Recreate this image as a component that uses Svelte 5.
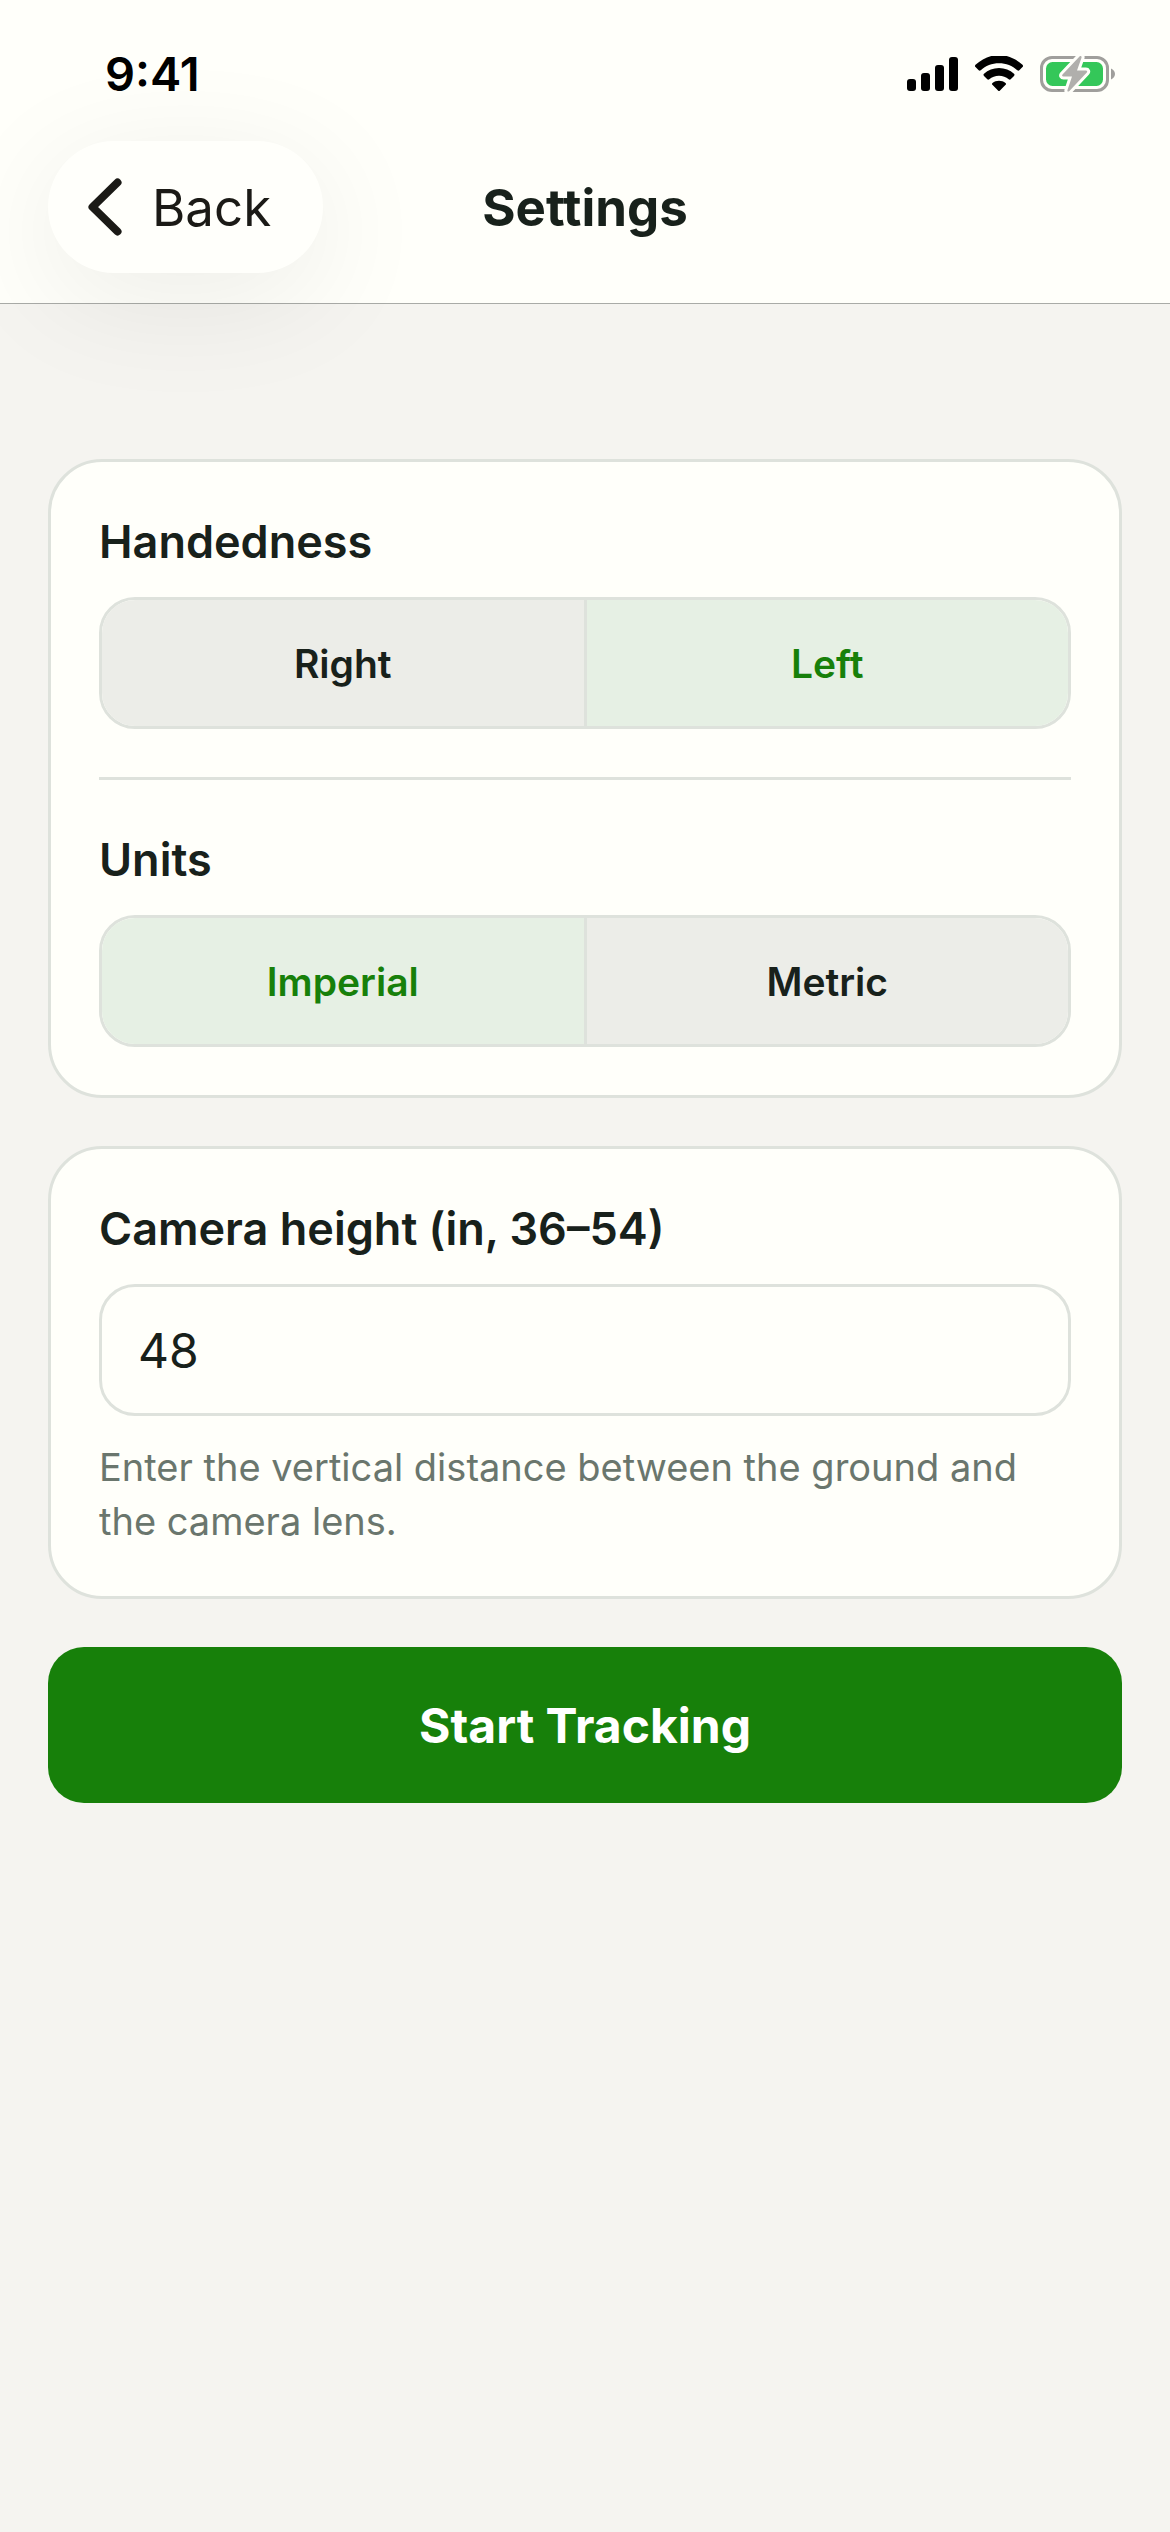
<script lang="ts">
    let handedness: string = 'Left';
    let units: string = 'Imperial';
    let cameraHeight: string = '48';
</script>

<div class="screen">
    <header>
        <div class="status-bar">
            <span class="time">9:41</span>
            <div class="status-icons">
                <svg width="51" height="36" viewBox="0 0 51 36" aria-hidden="true">
                    <rect x="0" y="23" width="9" height="12" rx="3" />
                    <rect x="14" y="17" width="9" height="18" rx="3" />
                    <rect x="28" y="9" width="9" height="26" rx="3" />
                    <rect x="42" y="1" width="9" height="34" rx="3" />
                </svg>
                <svg width="48" height="36" viewBox="0 0 48 36" aria-hidden="true">
                    <path d="M24 -1C33 -1 41 3 47.500 8.800C48.200 9.500 48.200 10.300 47.500 11L44.300 14.200C43.700 14.800 43 14.800 42.300 14.200C37.500 9.800 31 7.200 24 7.200C17 7.200 10.500 9.800 5.700 14.200C5 14.800 4.300 14.800 3.700 14.200L.5 11C-.2 10.300 -.2 9.500 .5 8.800C7 3 15 -1 24 -1Z" />
                    <path d="M24 12C29.800 12 35 14.200 39 17.800C39.700 18.500 39.700 19.200 39 19.900L35.700 23.200C35.100 23.800 34.400 23.800 33.700 23.200C31.100 21 27.700 19.700 24 19.700C20.300 19.700 16.900 21 14.300 23.200C13.600 23.800 12.900 23.800 12.300 23.200L9 19.900C8.300 19.200 8.300 18.500 9 17.800C13 14.200 18.200 12 24 12Z" />
                    <path d="M24 24.800C26.500 24.800 28.700 25.600 30.500 26.900C31.200 27.500 31.200 28.200 30.600 28.800L25 34.500C24.300 35.200 23.700 35.200 23 34.500L17.400 28.800C16.800 28.200 16.800 27.500 17.500 26.900C19.300 25.600 21.500 24.800 24 24.800Z" />
                </svg>
                <svg width="76" height="40" viewBox="0 0 76 40" aria-hidden="true">
                    <rect x="1.500" y="3.500" width="66" height="33" rx="10.500" fill="none" stroke="#a09f9c" stroke-width="3" />
                    <rect x="6" y="8" width="57" height="24" rx="6.500" fill="#34c759" />
                    <path d="M71 14.500C73.400 15.500 75 17.500 75 20C75 22.500 73.400 24.500 71 25.500Z" fill="#a09f9c" />
                    <path class="bolt" d="M39.500 2.500L22.500 20.500C21.700 21.500 22.200 22.500 23.500 22.500H32L27.500 36C27 37.600 28.300 38 29.400 37L46.800 18.500C47.600 17.500 47.200 16.500 45.900 16.500H37L41.500 3.800C42 2.200 40.700 1.400 39.500 2.500Z" />
                </svg>
            </div>
        </div>

        <nav>
            <button type="button" class="back">
                <svg width="34" height="58" viewBox="0 0 34 58" aria-hidden="true">
                    <path d="M29.500 4.500L4.500 29L29.500 53.500" />
                </svg>
                Back
            </button>
            <h1>Settings</h1>
        </nav>
    </header>

    <main>
        <section class="card">
            <div class="field">
                <h2 id="handedness-label">Handedness</h2>
                <div class="segmented" role="group" aria-labelledby="handedness-label">
                    {#each ['Right', 'Left'] as option}
                        <button
                            type="button"
                            class:selected={handedness === option}
                            aria-pressed={handedness === option}
                            on:click={() => (handedness = option)}
                        >{option}</button>
                    {/each}
                </div>
            </div>
            <hr />
            <div class="field">
                <h2 id="units-label">Units</h2>
                <div class="segmented" role="group" aria-labelledby="units-label">
                    {#each ['Imperial', 'Metric'] as option}
                        <button
                            type="button"
                            class:selected={units === option}
                            aria-pressed={units === option}
                            on:click={() => (units = option)}
                        >{option}</button>
                    {/each}
                </div>
            </div>
        </section>

        <section class="card">
            <div class="field">
                <label for="camera-height">Camera height (in, 36–54)</label>
                <input
                    id="camera-height"
                    type="text"
                    inputmode="numeric"
                    aria-describedby="camera-help"
                    bind:value={cameraHeight}
                />
                <p id="camera-help">Enter the vertical distance between the ground and the camera lens.</p>
            </div>
        </section>

        <button type="button" class="start">Start Tracking</button>
    </main>
</div>

<style>
    :global(body) {
        background: #f5f4f0;
    }

    .screen {
        min-height: 100vh;
        font-family: Inter, "Liberation Sans", sans-serif;
        color: #18211b;
    }

    header {
        background: #fffffa;
        border-bottom: 1px solid #a9aba7;
    }

    .status-bar {
        display: flex;
        justify-content: space-between;
        align-items: center;
        height: 93px;
        padding: 27px 54px 21px 105px;
    }

    .time {
        font-size: 47px;
        font-weight: 600;
        color: #000;
    }

    .status-icons {
        display: flex;
        align-items: center;
        gap: 17px;
    }

    .bolt {
        fill: #b0afac;
        stroke: #fffffa;
        stroke-width: 6px;
        stroke-linejoin: round;
        paint-order: stroke;
    }

    nav {
        display: grid;
        grid-template-columns: 1fr auto 1fr;
        align-items: center;
        padding: 0 48px 30px;
    }

    button {
        font-family: inherit;
        color: inherit;
        border: none;
        cursor: pointer;
    }

    .back {
        justify-self: start;
        display: flex;
        align-items: center;
        gap: 30px;
        height: 132px;
        padding: 0 52px 0 40px;
        border-radius: 66px;
        background: #fffffb;
        box-shadow: 0 24px 120px rgba(0, 0, 0, 0.08);
        font-size: 51px;
        color: #1b1a16;
    }

    .back path {
        fill: none;
        stroke: #1b1a16;
        stroke-width: 8px;
        stroke-linecap: round;
        stroke-linejoin: round;
    }

    h1 {
        margin: 0;
        font-size: 51px;
        font-weight: 700;
    }

    main {
        display: flex;
        flex-direction: column;
        gap: 48px;
        padding: 155px 48px 48px;
    }

    .card {
        padding: 48px;
        border: 3px solid #dee2dc;
        border-radius: 54px;
        background: #fffffa;
    }

    .field {
        display: flex;
        flex-direction: column;
        gap: 24px;
    }

    h2,
    label {
        margin: 0;
        font-size: 45px;
        font-weight: 600;
        line-height: 63px;
    }

    .segmented {
        display: flex;
        height: 126px;
        border: 3px solid #dee2dc;
        border-radius: 36px;
        overflow: hidden;
    }

    .segmented button {
        flex: 1;
        padding: 0;
        background: #ecede8;
        font-size: 39px;
        font-weight: 600;
    }

    .segmented button + button {
        border-left: 3px solid #dee2dc;
    }

    .segmented .selected {
        background: #e6f0e4;
        color: #17800a;
    }

    hr {
        height: 3px;
        margin: 48px 0;
        border: none;
        background: #dee2dc;
    }

    input {
        box-sizing: border-box;
        width: 100%;
        height: 132px;
        padding: 0 36px;
        border: 3px solid #dee2dc;
        border-radius: 36px;
        background: #fffffa;
        font-family: inherit;
        font-size: 48px;
        color: inherit;
    }

    p {
        margin: 0;
        font-size: 38px;
        line-height: 54px;
        color: #6a766d;
    }

    .start {
        height: 156px;
        border-radius: 36px;
        background: #17800a;
        font-size: 48px;
        font-weight: 700;
        color: #fff;
    }
</style>
